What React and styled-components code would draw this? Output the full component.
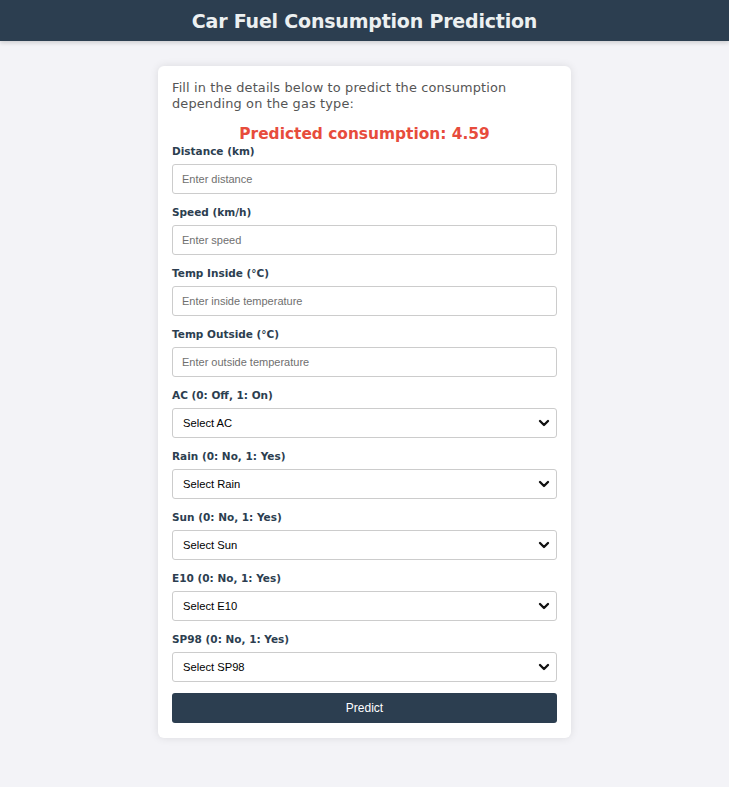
import React from 'react'
import styled, { createGlobalStyle } from 'styled-components'
import { ChevronDown } from 'lucide-react'

const Global = createGlobalStyle`
  body {
    margin: 0;
    background: #f3f3f7;
    font-family: "DejaVu Sans", "Open Sans", sans-serif;
  }
`

const Header = styled.header`
  background: #2c3e50;
  height: 41px;
  display: flex;
  align-items: center;
  justify-content: center;
  box-shadow: 0 2px 4px rgba(0,0,0,0.15);
`

const Title = styled.h1`
  margin: 0;
  color: #ecf0f1;
  font-size: 19px;
  font-weight: 700;
  letter-spacing: -0.2px;
`

const Main = styled.main`
  display: flex;
  justify-content: center;
  padding: 25px 0 40px;
`

const Card = styled.div`
  width: 385px;
  background: #fff;
  border-radius: 6px;
  padding: 14px 14px 15px;
  box-shadow: 0 0 8px rgba(0,0,0,0.1);
`

const Intro = styled.p`
  margin: 0;
  color: #555;
  font-size: 12.9px;
  line-height: 16px;
  letter-spacing: 0.15px;
`

const Result = styled.h2`
  margin: 11px 0 0;
  text-align: center;
  color: #e74c3c;
  font-size: 15.4px;
  font-weight: 700;
  line-height: 22px;
`

const Form = styled.form`
  display: flex;
  flex-direction: column;
`

const Label = styled.label`
  display: block;
  color: #2c3e50;
  font-size: 10.5px;
  font-weight: 700;
  line-height: 13px;
  margin-bottom: 6px;
  margin-top: ${p => (p.first ? '0' : '12px')};
`

const Input = styled.input`
  box-sizing: border-box;
  width: 100%;
  height: 30px;
  border: 1px solid #ccc;
  border-radius: 3px;
  padding: 0 9px;
  font-family: "Liberation Sans", Arial, sans-serif;
  font-size: 11px;
  color: #333;
  outline: none;
  &::placeholder { color: #6f6f6f; }
`

const SelectWrap = styled.div`
  position: relative;
`

const Select = styled.select`
  box-sizing: border-box;
  width: 100%;
  height: 30px;
  border: 1px solid #ccc;
  border-radius: 3px;
  padding: 0 10px;
  background: #fff;
  appearance: none;
  font-family: "Liberation Sans", Arial, sans-serif;
  font-size: 11.2px;
  color: #000;
  outline: none;
`

const Arrow = styled.span`
  position: absolute;
  right: 5px;
  top: 7px;
  pointer-events: none;
  display: flex;
  color: #111;
`

const Button = styled.button`
  margin-top: 11px;
  height: 30px;
  border: none;
  border-radius: 3px;
  background: #2c3e50;
  color: #fff;
  font-family: "Liberation Sans", Arial, sans-serif;
  font-size: 12px;
`

const inputs = [
  ['Distance (km)', 'Enter distance'],
  ['Speed (km/h)', 'Enter speed'],
  ['Temp Inside (°C)', 'Enter inside temperature'],
  ['Temp Outside (°C)', 'Enter outside temperature'],
]

const selects = [
  ['AC (0: Off, 1: On)', 'Select AC'],
  ['Rain (0: No, 1: Yes)', 'Select Rain'],
  ['Sun (0: No, 1: Yes)', 'Select Sun'],
  ['E10 (0: No, 1: Yes)', 'Select E10'],
  ['SP98 (0: No, 1: Yes)', 'Select SP98'],
]

export default function App() {
  return (
    <>
      <Global />
      <Header>
        <Title>Car Fuel Consumption Prediction</Title>
      </Header>
      <Main>
        <Card>
          <Intro>Fill in the details below to predict the consumption depending on the gas type:</Intro>
          <Result>Predicted consumption: 4.59</Result>
          <Form onSubmit={e => e.preventDefault()}>
            {inputs.map(([l, p], i) => (
              <div key={l}>
                <Label first={i === 0}>{l}</Label>
                <Input placeholder={p} />
              </div>
            ))}
            {selects.map(([l, p]) => (
              <div key={l}>
                <Label>{l}</Label>
                <SelectWrap>
                  <Select defaultValue="">
                    <option value="">{p}</option>
                    <option value="0">0</option>
                    <option value="1">1</option>
                  </Select>
                  <Arrow><ChevronDown size={16} strokeWidth={3.5} /></Arrow>
                </SelectWrap>
              </div>
            ))}
            <Button type="submit">Predict</Button>
          </Form>
        </Card>
      </Main>
    </>
  )
}
